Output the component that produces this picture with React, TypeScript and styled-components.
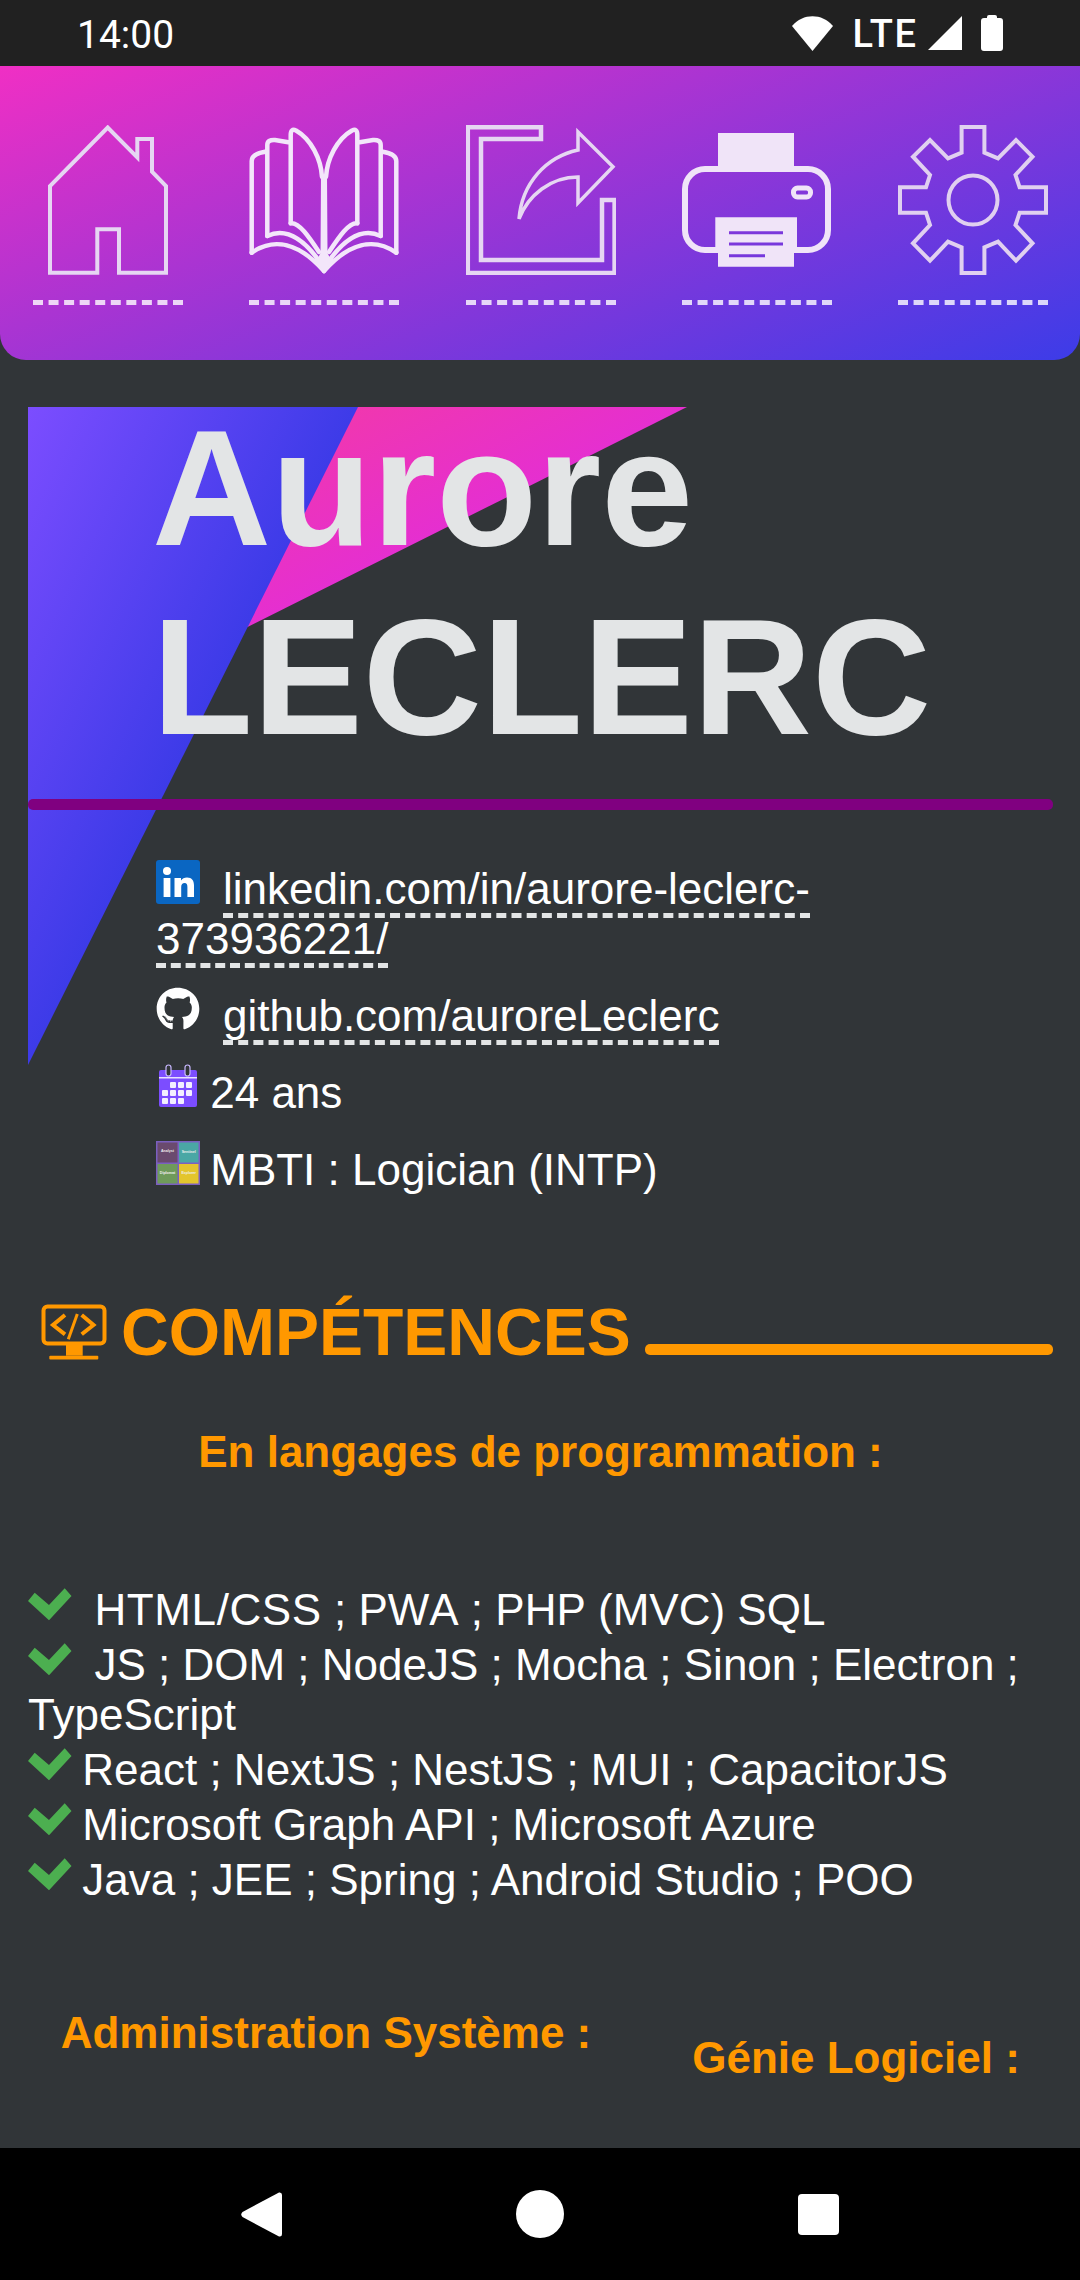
import { FC } from "react";
import styled, { createGlobalStyle } from "styled-components";
import { FaGithub } from "react-icons/fa";

const GlobalStyle = createGlobalStyle`
    html, body {
        margin: 0;
        padding: 0;
        background: #313538;
    }
    * {
        box-sizing: border-box;
    }
`

const HomeIcon: FC = () => (
    <MenuSvg viewBox="0 0 150 150" fill="none" stroke="#e6d6f2" strokeWidth="4">
        <path d="M17 147.7V61L74.7 2.5 104.3 32.3V14H119V46.7L133 61V147.7H86V104.3H64.3V147.7Z" />
    </MenuSvg>
)

const BookHalf: FC = () => (
    <g>
        <path d="M2.7 127.7V36Q2.7 29 16 26.7M18.3 111V20Q18.3 14.5 26 15L39.3 17.3M41.7 98.3V10Q41.7 3 47 5.5C62 14 72 34 73 52" />
        <path d="M2.7 127.7C25 112 50 118 75 146M18.3 111C35 103 52 112 68 133M41.7 98.3C50 97 60 112 70 127" />
    </g>
)

const BookIcon: FC = () => (
    <MenuSvg viewBox="0 0 150 150" fill="none" stroke="#f3e6fa" strokeWidth="4.5" strokeLinecap="round">
        <BookHalf />
        <g transform="translate(150 0) scale(-1 1)">
            <BookHalf />
        </g>
        <path d="M72 50H78L78.5 128 84 139 75 147 66 139 71.5 128Z" fill="#f3e6fa" stroke="none" />
    </MenuSvg>
)

const ShareIcon: FC = () => (
    <MenuSvg viewBox="0 0 150 150" fill="none" stroke="#e6d6f2" strokeWidth="4.5">
        <path d="M1.8 2.3H75V14H15V135H136V75H148.6V148H1.8Z" />
        <path d="M147 41.7L112 7V25C80 32 56 58 53 94C62 70 85 52 112 52V78Z" strokeWidth="3.5" />
    </MenuSvg>
)

const PrinterIcon: FC = () => (
    <MenuSvg viewBox="0 0 150 150" fill="none" stroke="#f0e4f8" strokeWidth="6">
        <rect x="36" y="8" width="76" height="33" fill="#f0e4f8" stroke="none" />
        <rect x="3" y="44" width="143" height="81" rx="20" />
        <rect x="111.5" y="63" width="17" height="9" rx="4" strokeWidth="5" />
        <path
            fillRule="evenodd"
            fill="#f0e4f8"
            stroke="none"
            d="M33.3 92.3H115V123H112V141.7H36V123H33.3ZM47 106.2V109.2H101V106.2ZM47 117.5V120.5H101V117.5ZM47 129.2V132.2H83V129.2Z"
        />
    </MenuSvg>
)

const GearIcon: FC = () => (
    <MenuSvg viewBox="0 0 150 150" fill="none" stroke="#e0d0f0" strokeWidth="4">
        <polygon points="63.6,2 86.4,2 86.4,27.7 100,33.3 118,15 134.5,31.7 117.5,50 121.6,62.3 148,62.3 148,87.7 121.6,87.7 117.5,100 134.5,118.3 118,135.7 100,116.7 86.4,122.3 86.4,148 63.6,148 63.6,122.3 50,116.7 32,135.7 15,118.3 32,100 28,87.7 2,87.7 2,62.3 28,62.3 32,50 15,31.7 32,15 50,33.3 63.6,27.7" />
        <circle cx="75" cy="75" r="24.5" />
    </MenuSvg>
)

const LinkedinIcon: FC = () => (
    <InlineSvg viewBox="0 0 44 44">
        <rect width="44" height="44" rx="3" fill="#0a66c2" />
        <circle cx="11" cy="11" r="4" fill="#fff" />
        <rect x="7.6" y="18" width="6.8" height="19" fill="#fff" />
        <path d="M18.5 18H25V20.6C26.2 18.8 28.4 17.5 31 17.5 36 17.5 38 20.5 38 25.5V37H31.4V27C31.4 24.6 30.6 23 28.6 23 26.5 23 25.2 24.6 25.2 27V37H18.5Z" fill="#fff" />
    </InlineSvg>
)

const CalendarIcon: FC = () => (
    <InlineSvg viewBox="0 0 44 44">
        <rect x="3" y="6" width="38" height="37" rx="2" fill="#7c4dff" />
        <rect x="3" y="13" width="38" height="1.5" fill="#e9e1ff" />
        <rect x="10" y="1" width="5" height="11" rx="2.5" fill="#313538" stroke="#c9b8ff" strokeWidth="1.2" />
        <rect x="29" y="1" width="5" height="11" rx="2.5" fill="#313538" stroke="#c9b8ff" strokeWidth="1.2" />
        <g fill="#f3eeff">
            <rect x="14" y="18" width="6" height="6" rx="1" />
            <rect x="22" y="18" width="6" height="6" rx="1" />
            <rect x="30" y="18" width="6" height="6" rx="1" />
            <rect x="6" y="26" width="6" height="6" rx="1" />
            <rect x="14" y="26" width="6" height="6" rx="1" />
            <rect x="22" y="26" width="6" height="6" rx="1" />
            <rect x="30" y="26" width="6" height="6" rx="1" />
            <rect x="6" y="34" width="6" height="6" rx="1" />
            <rect x="14" y="34" width="6" height="6" rx="1" />
            <rect x="22" y="34" width="6" height="6" rx="1" />
        </g>
    </InlineSvg>
)

const MbtiIcon: FC = () => (
    <InlineSvg viewBox="0 0 44 44">
        <rect width="44" height="44" fill="#7b5fc0" />
        <rect x="1.5" y="1.5" width="20" height="20" fill="#6a4a6e" />
        <rect x="23" y="1.5" width="19.5" height="20" fill="#4aa7a5" />
        <rect x="1.5" y="23" width="20" height="19.5" fill="#6f9a5a" />
        <rect x="23" y="23" width="19.5" height="19.5" fill="#e3c52d" />
        <g fontFamily="'Liberation Sans', sans-serif" fontSize="3.6" fontWeight="700" fill="#eee" textAnchor="middle">
            <text x="11.5" y="11">Analyst</text>
            <text x="32.7" y="12">Sentinel</text>
            <text x="11.5" y="33">Diplomat</text>
            <text x="32.7" y="33">Explorer</text>
        </g>
    </InlineSvg>
)

const CheckIcon: FC = () => (
    <CheckSvg viewBox="0 0 44 45">
        <path d="M0 21L6.7 12.7 21 25 36.7 8.3 43.5 16 21 40.3Z" fill="#4caf50" />
    </CheckSvg>
)

const CodeIcon: FC = () => (
    <HeadingSvg viewBox="0 0 66 56" fill="none" stroke="#ff9800" strokeWidth="4">
        <rect x="2.5" y="2.5" width="61" height="37" rx="4" />
        <path d="M24 11L12 21 24 30.3M40.7 11L52.5 21 40.7 30.3" />
        <path d="M36.3 10L27.3 35.3" strokeWidth="3" />
        <path d="M25 41H41.7V51.7H25Z" fill="#ff9800" stroke="none" />
        <rect x="8.3" y="51.7" width="49" height="3.8" rx="1" fill="#ff9800" stroke="none" />
    </HeadingSvg>
)

const menuIcons = [HomeIcon, BookIcon, ShareIcon, PrinterIcon, GearIcon]

const skills = [
    { lead: "HTML/CSS", text: " ; PWA ; PHP (MVC) SQL", spaced: true },
    { lead: "", text: "JS ; DOM ; NodeJS ; Mocha ; Sinon ; Electron ; TypeScript", spaced: true },
    { lead: "", text: "React ; NextJS ; NestJS ; MUI ; CapacitorJS", spaced: false },
    { lead: "", text: "Microsoft Graph API ; Microsoft Azure", spaced: false },
    { lead: "", text: "Java ; JEE ; Spring ; Android Studio ; POO", spaced: false },
]

const App: FC = () => {
    return (
        <Screen>
            <GlobalStyle />
            <StatusBar>
                <Clock>14:00</Clock>
                <StatusIcons>
                    <svg width="41" height="35" viewBox="0 0 41 35">
                        <path d="M20.5 35L0 10C11 -3 30 -3 41 10Z" fill="#fff" />
                    </svg>
                    <Lte>LTE</Lte>
                    <svg width="34" height="34" viewBox="0 0 34 34">
                        <path d="M34 0V34H0Z" fill="#fff" />
                    </svg>
                    <BatterySvg viewBox="0 0 22 36">
                        <path d="M6 3V2Q6 0 8 0H14Q16 0 16 2V3H19Q22 3 22 6V33Q22 36 19 36H3Q0 36 0 33V6Q0 3 3 3Z" fill="#fff" />
                    </BatterySvg>
                </StatusIcons>
            </StatusBar>
            <Menu>
                {menuIcons.map((Icon, index) => (
                    <MenuItem key={index}>
                        <Icon />
                    </MenuItem>
                ))}
            </Menu>
            <Main>
                <Hero>
                    <PinkShape />
                    <BlueShape />
                    <Title>
                        Aurore
                        <br />
                        LECLERC
                    </Title>
                    <HeroBar />
                    <Contact>
                        <ContactRow>
                            <LinkedinIcon />
                            <ContactLink>linkedin.com/in/aurore-leclerc-373936221/</ContactLink>
                        </ContactRow>
                        <ContactRow>
                            <InlineIcon>
                                <FaGithub size={44} color="#fff" />
                            </InlineIcon>
                            <ContactLink>github.com/auroreLeclerc</ContactLink>
                        </ContactRow>
                        <ContactRow>
                            <CalendarIcon /> 24 ans
                        </ContactRow>
                        <ContactRow>
                            <MbtiIcon /> MBTI : Logician (INTP)
                        </ContactRow>
                    </Contact>
                </Hero>
                <SectionHeading>
                    <CodeIcon />
                    <HeadingText>COMPÉTENCES</HeadingText>
                    <HeadingLine />
                </SectionHeading>
                <SubHeading>En langages de programmation :</SubHeading>
                <SkillList>
                    {skills.map((skill) => (
                        <SkillItem key={skill.text} $plain={!!skill.lead}>
                            <CheckIcon /> {skill.spaced ? "\u00a0" : ""}
                            {skill.lead && <WideWord>{skill.lead}</WideWord>}
                            {skill.text}
                        </SkillItem>
                    ))}
                </SkillList>
                <Columns>
                    <SubHeadingSmall>Administration Système :</SubHeadingSmall>
                    <SubHeadingSmall $lower>Génie Logiciel :</SubHeadingSmall>
                </Columns>
            </Main>
            <NavBar>
                <svg width="41" height="45" viewBox="0 0 41 45">
                    <path d="M38 0.5Q41 0 41 3V42Q41 45 38 44.5L1.5 25Q-1 22.5 1.5 20Z" fill="#fff" />
                </svg>
                <svg width="48" height="48" viewBox="0 0 48 48">
                    <circle cx="24" cy="24" r="24" fill="#fff" />
                </svg>
                <svg width="41" height="41" viewBox="0 0 41 41">
                    <rect width="41" height="41" rx="4" fill="#fff" />
                </svg>
            </NavBar>
        </Screen>
    )
}

export default App


const Screen = styled.div`
    display: flex;
    flex-direction: column;
    width: 1080px;
    height: 2280px;
    overflow: hidden;
    background: #313538;
    color: #fff;
    font-family: "Liberation Sans", Arial, sans-serif;
`

const StatusBar = styled.div`
    display: flex;
    flex: none;
    align-items: center;
    justify-content: space-between;
    height: 66px;
    padding: 0 77px 0 77px;
    background: #212121;
    color: #fff;
    font-family: Roboto, sans-serif;
`

const Clock = styled.span`
    font-size: 39px;
    line-height: 66px;
    padding-top: 3px;
`

const StatusIcons = styled.div`
    display: flex;
    align-items: center;
`

const Lte = styled.span`
    margin: 2px 10.5px 0 19px;
    font-size: 38px;
    font-weight: 500;
    letter-spacing: 1.5px;
`

const BatterySvg = styled.svg`
    width: 22px;
    height: 36px;
    margin-left: 19px;
`

const Menu = styled.div`
    display: grid;
    flex: none;
    grid-template-columns: repeat(5, 216.25px);
    height: 294px;
    padding-top: 59px;
    border-radius: 0 0 26px 26px;
    background: linear-gradient(160deg, #f02fc4 0%, #3c3ce8 100%);
`

const MenuItem = styled.div`
    justify-self: center;
    width: 150px;
    height: 180px;
    border-bottom: 5px dashed rgba(255, 255, 255, 0.8);
`

const MenuSvg = styled.svg`
    display: block;
    width: 150px;
    height: 150px;
`

const Main = styled.main`
    flex: 1;
    min-height: 0;
    padding: 34px 27px 0 28px;
    overflow: hidden;
`

const Hero = styled.section`
    position: relative;
`

const PinkShape = styled.div`
    position: absolute;
    top: 13px;
    left: 0;
    width: 659px;
    height: 330px;
    background: linear-gradient(to bottom right, #fb3f8f 0%, #e52fd0 50%);
    clip-path: polygon(0 0, 100% 0, 0 100%);
`

const BlueShape = styled.div`
    position: absolute;
    top: 13px;
    left: 0;
    width: 330px;
    height: 658px;
    background: linear-gradient(to bottom right, #7c4dff 0%, #3d3be8 50%);
    clip-path: polygon(0 0, 100% 0, 0 100%);
`

const Title = styled.h1`
    position: relative;
    margin: 0 0 27px 124px;
    color: #e3e5e6;
    font-size: 165px;
    font-weight: 700;
`

const HeroBar = styled.div`
    position: relative;
    height: 11px;
    border-radius: 5px;
    background: #800080;
`

const Contact = styled.div`
    position: relative;
    display: flex;
    flex-direction: column;
    gap: 23px;
    margin: 50px 40px 0 128px;
    font-size: 44px;
`

const ContactRow = styled.div``

const ContactLink = styled.a`
    margin-left: 25px;
    border-bottom: 5px dashed #e3e5e6;
    color: #fff;
`

const InlineSvg = styled.svg`
    display: inline-block;
    width: 44px;
    height: 44px;
    margin-right: -2px;
    vertical-align: baseline;
`

const InlineIcon = styled.span`
    display: inline-block;
    width: 44px;
    height: 44px;
    margin-right: -2px;
    vertical-align: baseline;
`

const SectionHeading = styled.h2`
    display: flex;
    align-items: flex-end;
    margin: 99px 0 0;
    padding-left: 13px;
    color: #ff9800;
    font-size: 66px;
    font-weight: 700;
`

const HeadingSvg = styled.svg`
    flex: none;
    width: 66px;
    height: 56px;
    margin: 0 14px 10px 0;
`

const HeadingText = styled.span``

const HeadingLine = styled.span`
    flex: 1;
    height: 11px;
    margin: 0 0 15px 14px;
    border-radius: 5px;
    background: #ff9800;
`

const SubHeading = styled.h3`
    margin: 57px 0 0;
    color: #ff9800;
    font-size: 44px;
    font-weight: 700;
    text-align: center;
`

const SkillList = styled.ul`
    margin: 103px 0 0;
    padding: 0;
    list-style: none;
    font-size: 44px;
`

const SkillItem = styled.li<{$plain?: boolean}>`
    font-kerning: ${props => props.$plain ? "none" : "auto"};
`

const WideWord = styled.span`
    letter-spacing: 0.6px;
`

const CheckSvg = styled.svg`
    display: inline-block;
    width: 44px;
    height: 45px;
    margin-right: -2px;
    vertical-align: baseline;
`

const Columns = styled.div`
    display: grid;
    grid-template-columns: 652px 408px;
    margin: 103px 0 0 -28px;
`

const SubHeadingSmall = styled.h3<{$lower?: boolean}>`
    margin: ${props => props.$lower ? "25px 0 0" : "0"};
    color: #ff9800;
    font-size: 44px;
    font-weight: 700;
    text-align: center;
    white-space: nowrap;
`

const NavBar = styled.nav`
    display: flex;
    flex: none;
    align-items: center;
    justify-content: center;
    gap: 234px;
    height: 132px;
    background: #000;
`
